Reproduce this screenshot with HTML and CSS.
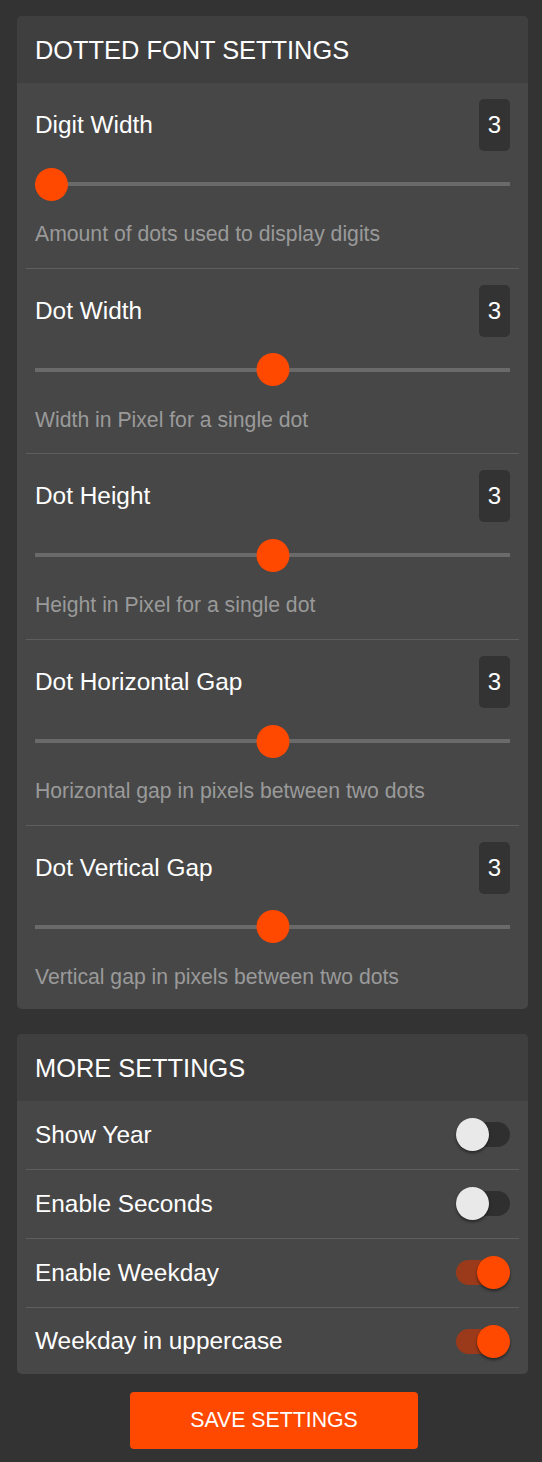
FILE: index.html
```html
<!DOCTYPE html>
<html lang="en">
<head>
<meta charset="utf-8">
<title>Settings</title>
<link rel="stylesheet" href="styles.css">
</head>
<body>
<main class="page">
  <section class="card">
    <h2 class="card-title">DOTTED FONT SETTINGS</h2>
    <div class="card-body">
      <div class="item">
        <div class="item-row">
          <span class="item-label">Digit Width</span>
          <span class="badge">3</span>
        </div>
        <div class="slider"><div class="track"></div><div class="thumb" style="left: 0%"></div></div>
        <p class="desc">Amount of dots used to display digits</p>
      </div>
      <div class="item">
        <div class="item-row">
          <span class="item-label">Dot Width</span>
          <span class="badge">3</span>
        </div>
        <div class="slider"><div class="track"></div><div class="thumb mid" style="left: 50%"></div></div>
        <p class="desc">Width in Pixel for a single dot</p>
      </div>
      <div class="item">
        <div class="item-row">
          <span class="item-label">Dot Height</span>
          <span class="badge">3</span>
        </div>
        <div class="slider"><div class="track"></div><div class="thumb mid" style="left: 50%"></div></div>
        <p class="desc">Height in Pixel for a single dot</p>
      </div>
      <div class="item">
        <div class="item-row">
          <span class="item-label">Dot Horizontal Gap</span>
          <span class="badge">3</span>
        </div>
        <div class="slider"><div class="track"></div><div class="thumb mid" style="left: 50%"></div></div>
        <p class="desc">Horizontal gap in pixels between two dots</p>
      </div>
      <div class="item">
        <div class="item-row">
          <span class="item-label">Dot Vertical Gap</span>
          <span class="badge">3</span>
        </div>
        <div class="slider"><div class="track"></div><div class="thumb mid" style="left: 50%"></div></div>
        <p class="desc">Vertical gap in pixels between two dots</p>
      </div>
    </div>
  </section>

  <section class="card card-more">
    <h2 class="card-title">MORE SETTINGS</h2>
    <div class="card-body">
      <div class="toggle-row">
        <span class="item-label">Show Year</span>
        <span class="toggle"><span class="toggle-thumb"></span></span>
      </div>
      <div class="toggle-row">
        <span class="item-label">Enable Seconds</span>
        <span class="toggle"><span class="toggle-thumb"></span></span>
      </div>
      <div class="toggle-row">
        <span class="item-label">Enable Weekday</span>
        <span class="toggle on"><span class="toggle-thumb"></span></span>
      </div>
      <div class="toggle-row">
        <span class="item-label">Weekday in uppercase</span>
        <span class="toggle on"><span class="toggle-thumb"></span></span>
      </div>
    </div>
  </section>

  <div class="actions">
    <button class="save-btn" type="button">SAVE SETTINGS</button>
  </div>
</main>
</body>
</html>
```

FILE: styles.css
```css
* { box-sizing: border-box; }

html, body {
  margin: 0;
  padding: 0;
  background: #333333;
}

body {
  font-family: "Liberation Sans", Arial, sans-serif;
  color: #ffffff;
}

.page {
  padding: 16px 14px 13px 17px;
  display: flex;
  flex-direction: column;
}

.card {
  background: #474747;
  border-radius: 5px;
  overflow: hidden;
}

.card-more {
  margin-top: 25px;
}

.card-title {
  margin: 0;
  background: #3f3f3f;
  font-size: 25.4px;
  font-weight: normal;
  line-height: 35px;
  padding: 17px 18px 15px;
}

.card-body {
  display: flex;
  flex-direction: column;
}

.item {
  margin: 0 9px;
  padding: 16px 9px 0;
  border-bottom: 1px solid #5e5e5e;
  height: 185.7px;
}

.item:last-child {
  border-bottom: none;
  height: 183px;
}

.item-row {
  display: flex;
  justify-content: space-between;
  align-items: center;
  height: 52px;
}

.item-label {
  font-size: 24.4px;
  color: #ffffff;
}

.badge {
  width: 31px;
  height: 52px;
  background: #333333;
  border-radius: 5px;
  display: flex;
  align-items: center;
  justify-content: center;
  font-size: 24px;
}

.slider {
  position: relative;
  margin-top: 16px;
  height: 34px;
}

.track {
  position: absolute;
  left: 0;
  right: 0;
  top: 15px;
  height: 4px;
  background: #6a6a6a;
}

.thumb {
  position: absolute;
  top: 0.5px;
  width: 33px;
  height: 33px;
  border-radius: 50%;
  background: #ff4800;
}

.thumb.mid {
  transform: translateX(-50%);
}

.desc {
  margin: 19px 0 0;
  font-size: 21.2px;
  line-height: 28px;
  color: #9a9a9a;
}

.toggle-row {
  margin: 0 9px;
  padding: 0 9px;
  height: 69px;
  display: flex;
  justify-content: space-between;
  align-items: center;
  border-bottom: 1px solid #5e5e5e;
}

.toggle-row:last-child {
  border-bottom: none;
  height: 66.5px;
}

.toggle {
  position: relative;
  width: 54px;
  height: 25px;
  border-radius: 13px;
  background: #2f2f2f;
}

.toggle-thumb {
  position: absolute;
  left: 0;
  top: -4px;
  width: 33px;
  height: 33px;
  border-radius: 50%;
  background: #e9e9e9;
  box-shadow: 0 2px 3px rgba(0, 0, 0, 0.45);
}

.toggle.on {
  background: #9a3a1a;
}

.toggle.on .toggle-thumb {
  left: auto;
  right: 0;
  background: #ff4800;
}

.actions {
  display: flex;
  justify-content: center;
  margin-top: 18px;
}

.save-btn {
  width: 288px;
  height: 57px;
  margin-left: 3px;
  border: none;
  border-radius: 4px;
  background: #ff4800;
  color: #ffffff;
  font-family: "Liberation Sans", Arial, sans-serif;
  font-size: 21.3px;
  padding: 0;
}
```
